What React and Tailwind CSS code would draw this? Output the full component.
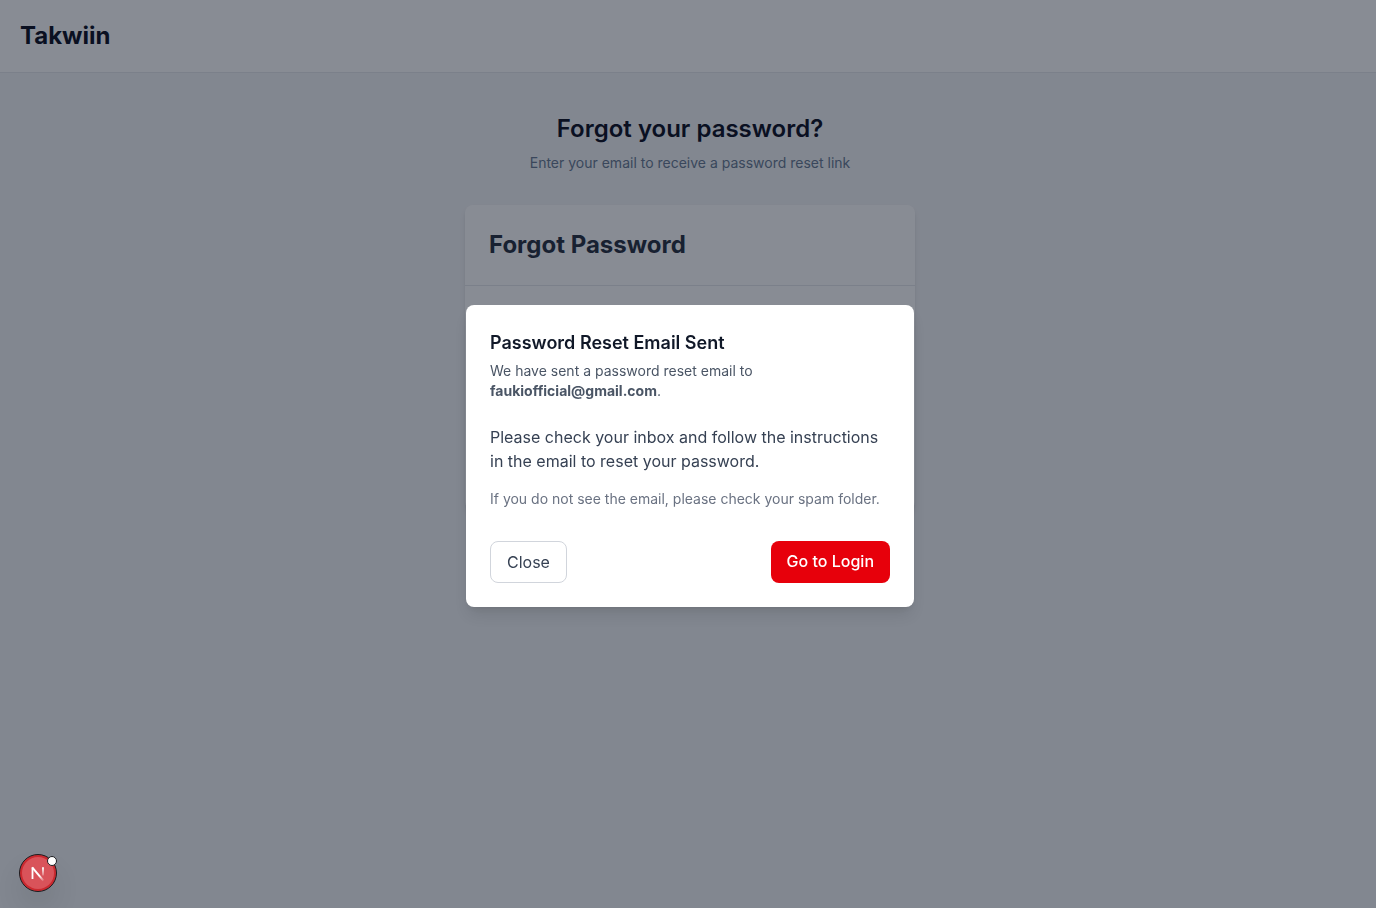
import React from "react";

function DevBadge() {
  return (
    <button
      type="button"
      aria-label="Open developer tools"
      className="fixed bottom-4 left-[19px] size-[38px] rounded-full shadow-[0_16px_32px_-8px_rgba(0,0,0,0.24)]"
    >
      <svg viewBox="0 0 38 38" className="size-[38px] overflow-visible" fill="none">
        <circle cx="19" cy="19" r="18.5" fill="#ca2a30" stroke="#1c1c1f" />
        <circle cx="19" cy="19" r="16" fill="#d9535a" />
        <path d="M13.5 25V13.4" stroke="#fff" strokeWidth="1.8" />
        <path d="M13.2 13.4L24.4 26.6" stroke="url(#diag)" strokeWidth="2" />
        <path d="M24 13.2V21.5" stroke="url(#stem)" strokeWidth="1.8" />
        <circle cx="33" cy="7" r="4.5" fill="#fff" stroke="#1c1c1f" />
        <defs>
          <linearGradient id="diag" x1="13" y1="13" x2="24.4" y2="26.6" gradientUnits="userSpaceOnUse">
            <stop offset="0.65" stopColor="#fff" />
            <stop offset="1" stopColor="#fff" stopOpacity="0.15" />
          </linearGradient>
          <linearGradient id="stem" x1="24" y1="14" x2="24" y2="24" gradientUnits="userSpaceOnUse">
            <stop stopColor="#fff" />
            <stop offset="1" stopColor="#fff" stopOpacity="0" />
          </linearGradient>
        </defs>
      </svg>
    </button>
  );
}

function ResetDialog() {
  return (
    <div className="fixed inset-0 flex items-center justify-center bg-[#121a29]/50 pt-1 pl-1">
      <section
        role="dialog"
        aria-modal="true"
        aria-labelledby="dialog-title"
        className="w-full max-w-md rounded-lg bg-white p-6 shadow-lg"
      >
        <h2 id="dialog-title" className="text-lg leading-7 font-semibold text-gray-900">
          Password Reset Email Sent
        </h2>
        <p className="mt-1 text-sm text-gray-600">
          We have sent a password reset email to{" "}
          <strong className="block font-bold">
            faukiofficial@gmail.com<span className="font-normal">.</span>
          </strong>
        </p>
        <p className="mt-6 text-base text-gray-700">
          Please check your inbox and follow the instructions in the email to reset your password.
        </p>
        <p className="mt-4 text-sm text-gray-500">
          If you do not see the email, please check your spam folder.
        </p>
        <div className="mt-8 flex justify-between">
          <button type="button" className="rounded-lg border border-gray-300 px-4 py-2 text-base text-gray-700">
            Close
          </button>
          <a href="#login" className="rounded-lg bg-red-600 px-4 py-2 text-base font-medium text-white">
            Go to Login
          </a>
        </div>
      </section>
    </div>
  );
}

export default function App() {
  return (
    <div className="min-h-screen bg-gray-100 font-['Inter',sans-serif] text-slate-950">
      <header className="border-b border-gray-200 bg-white px-5 py-5">
        <a href="#home" className="block text-2xl font-bold">Takwiin</a>
      </header>
      <main className="flex flex-col items-center pt-10 pl-1">
        <h1 className="text-2xl font-semibold">Forgot your password?</h1>
        <p className="mt-2 text-sm text-slate-500">Enter your email to receive a password reset link</p>
        <section className="mt-8 w-full max-w-[450px] rounded-lg bg-white shadow-md">
          <h2 className="border-b border-gray-200 p-6 text-2xl font-bold text-gray-800">Forgot Password</h2>
          <div className="h-56" />
        </section>
      </main>
      <ResetDialog />
      <DevBadge />
    </div>
  );
}
